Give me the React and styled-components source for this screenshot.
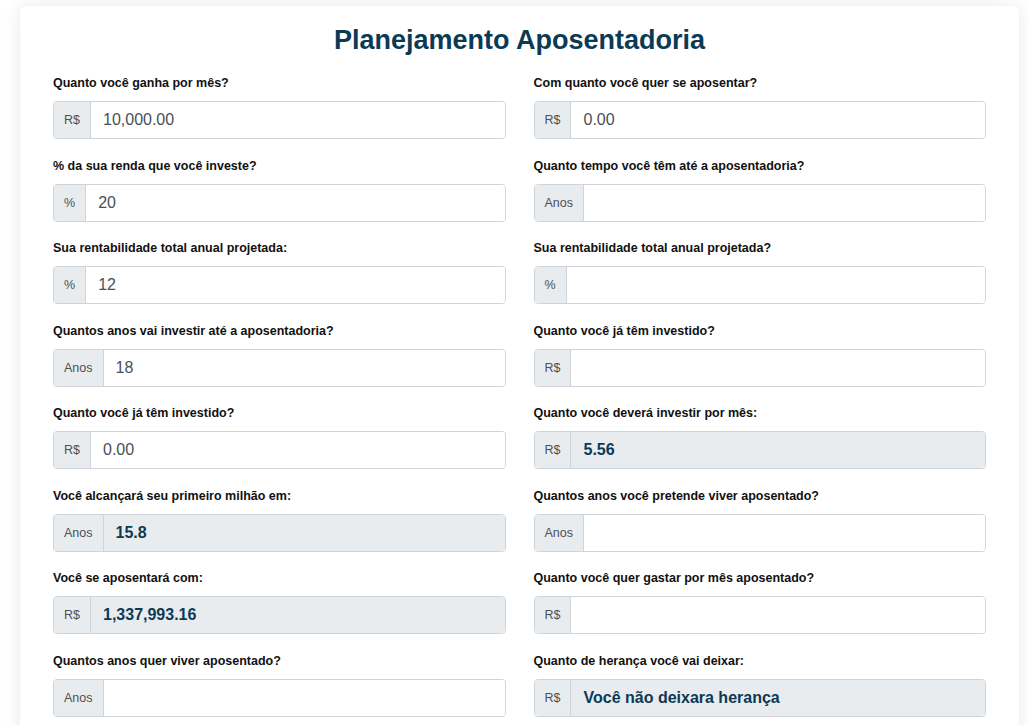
import styled, { createGlobalStyle } from "styled-components";

const fields = [
  [
    { label: "Quanto você ganha por mês?", unit: "R$", value: "10,000.00" },
    { label: "% da sua renda que você investe?", unit: "%", value: "20" },
    { label: "Sua rentabilidade total anual projetada:", unit: "%", value: "12" },
    { label: "Quantos anos vai investir até a aposentadoria?", unit: "Anos", value: "18" },
    { label: "Quanto você já têm investido?", unit: "R$", value: "0.00" },
    { label: "Você alcançará seu primeiro milhão em:", unit: "Anos", value: "15.8", result: true },
    { label: "Você se aposentará com:", unit: "R$", value: "1,337,993.16", result: true },
    { label: "Quantos anos quer viver aposentado?", unit: "Anos", value: "" },
  ],
  [
    { label: "Com quanto você quer se aposentar?", unit: "R$", value: "0.00" },
    { label: "Quanto tempo você têm até a aposentadoria?", unit: "Anos", value: "" },
    { label: "Sua rentabilidade total anual projetada?", unit: "%", value: "" },
    { label: "Quanto você já têm investido?", unit: "R$", value: "" },
    { label: "Quanto você deverá investir por mês:", unit: "R$", value: "5.56", result: true },
    { label: "Quantos anos você pretende viver aposentado?", unit: "Anos", value: "" },
    { label: "Quanto você quer gastar por mês aposentado?", unit: "R$", value: "" },
    { label: "Quanto de herança você vai deixar:", unit: "R$", value: "Você não deixara herança", result: true },
  ],
];

const App = () => {
  return (
    <>
      <GlobalStyle />
      <Card>
        <Title>Planejamento Aposentadoria</Title>
        <Columns>
          {fields.map((col, ci) => (
            <Column key={ci}>
              {col.map((f, i) => (
                <FormGroup key={i}>
                  <Label>{f.label}</Label>
                  <InputGroup>
                    <Prefix>{f.unit}</Prefix>
                    {f.result ? (
                      <Result>{f.value}</Result>
                    ) : (
                      <Input defaultValue={f.value} />
                    )}
                  </InputGroup>
                </FormGroup>
              ))}
            </Column>
          ))}
        </Columns>
      </Card>
    </>
  );
};

const GlobalStyle = createGlobalStyle`
  body {
    margin: 0;
    background: #ffffff;
    font-family: "Liberation Sans", Arial, sans-serif;
    overflow: hidden;
  }
`;

// main card
const Card = styled.div`
  margin: 6px 9px 0 20px;
  background: #ffffff;
  border-radius: 6px;
  box-shadow: 0 0 18px rgba(0, 0, 0, 0.09);
  padding: 17px 33px 20px 33px;
`;

const Title = styled.h1`
  margin: 0 0 16px 0;
  text-align: center;
  font-size: 27px;
  line-height: 34px;
  font-weight: 700;
  color: #0b3a55;
`;

// layout
const Columns = styled.div`
  display: grid;
  grid-template-columns: 1fr 1fr;
  column-gap: 28px;
`;

const Column = styled.div`
  display: flex;
  flex-direction: column;
`;

const FormGroup = styled.div`
  margin-bottom: 16.5px;
`;

const Label = styled.div`
  font-size: 12.5px;
  line-height: 21px;
  font-weight: 700;
  color: #111;
  margin-bottom: 7px;
`;

// input
const InputGroup = styled.div`
  display: flex;
  height: 38px;
  box-sizing: border-box;
  border: 1px solid #ced4da;
  border-radius: 4px;
  overflow: hidden;
`;

const Prefix = styled.span`
  display: flex;
  align-items: center;
  padding: 0 10px;
  background: #e9ecef;
  border-right: 1px solid #ced4da;
  font-size: 12.5px;
  color: #495057;
`;

const Input = styled.input`
  flex: 1;
  border: none;
  outline: none;
  padding: 0 12px;
  font-family: "Liberation Sans", Arial, sans-serif;
  font-size: 16px;
  color: #495057;
  background: #ffffff;
`;

const Result = styled.div`
  flex: 1;
  display: flex;
  align-items: center;
  padding: 0 12px;
  background: #e9ecef;
  font-size: 16px;
  font-weight: 700;
  color: #0b3a55;
`;

export default App;
